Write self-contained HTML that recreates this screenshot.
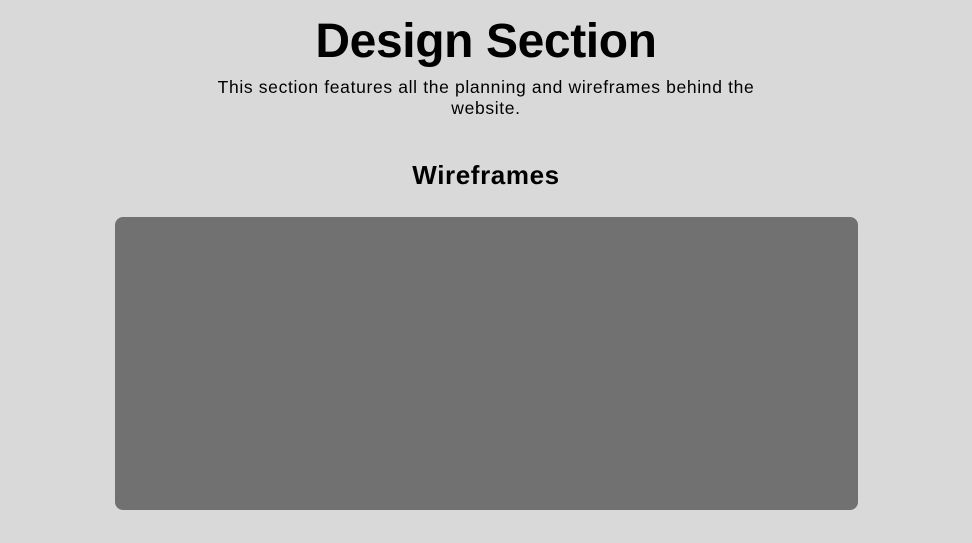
<!DOCTYPE html>
<html><head><style>
html,body{margin:0;padding:0;background:#d9d9d9;width:972px;height:543px;overflow:hidden;font-family:"Liberation Sans",sans-serif;color:#000}
h1{position:absolute;top:14px;left:0;width:972px;text-align:center;margin:0;font-size:48px;font-weight:900;letter-spacing:-0.4px;line-height:56px}
p{position:absolute;top:77px;left:201px;width:570px;text-align:center;margin:0;font-size:17.5px;line-height:21px;letter-spacing:0.65px}
h2{position:absolute;top:159px;left:0;width:972px;text-align:center;margin:0;font-size:26px;font-weight:bold;line-height:32px;letter-spacing:0.6px}
.box{position:absolute;left:115px;top:217px;width:743px;height:293px;background:#717171;border-radius:8px}
</style></head><body>
<h1>Design Section</h1>
<p>This section features all the planning and wireframes behind the website.</p>
<h2>Wireframes</h2>
<div class="box"></div>
</body></html>
